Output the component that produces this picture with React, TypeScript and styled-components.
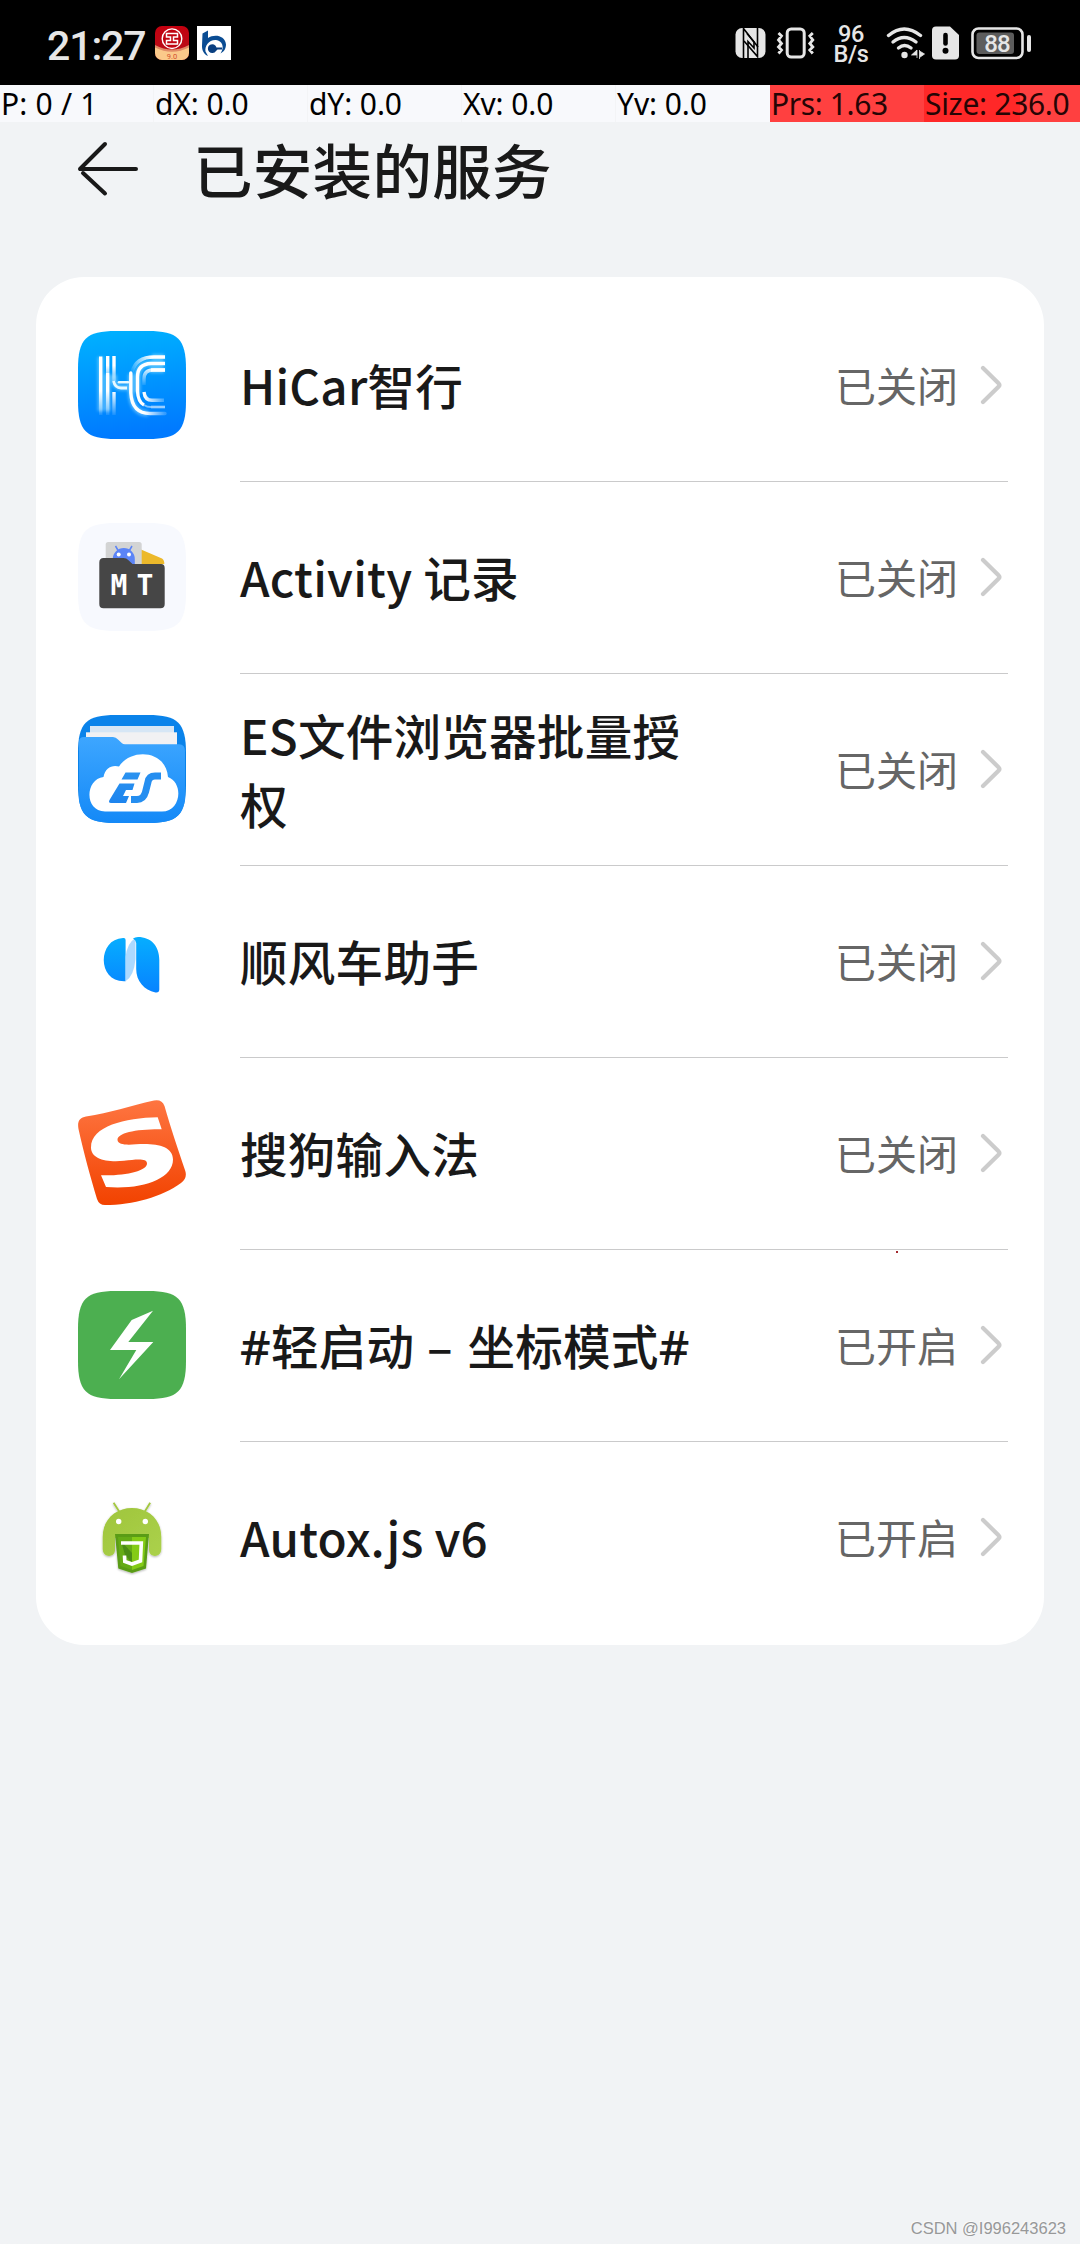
import React from 'react';
import styled, { createGlobalStyle } from 'styled-components';

const Global = createGlobalStyle`
  * { box-sizing: border-box; }
  body { margin: 0; background: #f1f3f5; }
`;

const Screen = styled.div`
  position: relative;
  display: flex;
  flex-direction: column;
  width: 1080px;
  height: 2244px;
  overflow: hidden;
  background: #f1f3f5;
  color: #191919;
  font-family: "Noto Sans CJK SC", "Noto Sans", sans-serif;
`;

const StatusBar = styled.header`
  display: flex;
  align-items: center;
  height: 85px;
  padding: 1px 48px 0 47px;
  background: #000;
  color: #e6e6e6;
`;

const Clock = styled.span`
  width: 108px;
  font-family: Roboto, sans-serif;
  font-size: 41px;
  font-weight: 500;
  line-height: 48px;
  letter-spacing: -1.1px;
  padding-top: 5px;
  white-space: nowrap;
`;

const Notifications = styled.div`
  display: flex;
  gap: 8px;
`;

const Indicators = styled.div`
  display: flex;
  align-items: center;
  margin-left: auto;
`;

const Indicator = styled.svg<{ $gap: number }>`
  display: block;
  margin-left: ${(p) => p.$gap}px;
`;

const Speed = styled.div`
  display: flex;
  flex-direction: column;
  align-items: center;
  width: 38px;
  margin: 0 16px 0 16px;
  padding-top: 2px;
  font-family: Roboto, sans-serif;
  font-size: 23.5px;
  font-weight: 500;
  line-height: 20.5px;
  letter-spacing: -0.3px;
`;

const DebugStrip = styled.div`
  display: grid;
  grid-template-columns: 153px 154px 154px 154px 155px 154px 156px;
  height: 37px;
`;

const DebugCell = styled.div<{ $bg?: string; $first?: boolean; $track?: number }>`
  padding-left: 1px;
  border-left: ${(p) => (p.$bg || p.$first ? 'none' : '1px solid #f3f4f6')};
  background: ${(p) => p.$bg || '#f8f9fc'};
  color: ${(p) => (p.$bg ? '#260505' : '#000')};
  font-family: "Noto Sans", sans-serif;
  font-size: 30px;
  line-height: 37px;
  letter-spacing: ${(p) => p.$track ?? -0.1}px;
  white-space: nowrap;
`;

const TitleBar = styled.div`
  display: flex;
  align-items: center;
  height: 155px;
  padding: 0 0 61px 76px;
`;

const Title = styled.h1`
  margin: -3px 0 0 53px;
  font-size: 59.5px;
  line-height: 80px;
  letter-spacing: 0.3px;
  font-weight: 500;
`;

const Card = styled.main`
  margin: 0 36px;
  padding: 12px 36px 12px 42px;
  border-radius: 48px;
  background: #fff;
`;

const Row = styled.div`
  display: grid;
  grid-template: 192px / 108px 1fr;
  column-gap: 54px;
  align-items: center;
  height: 192px;
`;

const RowBody = styled.div<{ $divided: boolean }>`
  display: flex;
  align-items: center;
  align-self: start;
  height: 193px;
  padding: 0 6px 1px 0;
  border-bottom: 1px solid ${(p) => (p.$divided ? '#cacacb' : 'transparent')};
`;

const Name = styled.span`
  width: 480px;
  font-size: 47.6px;
  line-height: 69px;
  letter-spacing: 0.2px;
  font-weight: 500;
  white-space: pre-wrap;
`;

const Dash = styled.span`
  letter-spacing: 2px;
`;

const Hash = styled.span`
  font-family: "Noto Sans", sans-serif;
  line-height: 1;
`;

const State = styled.span`
  margin: -2px 22px 0 auto;
  color: #666;
  font-size: 41px;
  line-height: 60px;
`;

const Chevron = styled.svg`
  display: block;
`;

const AppIcon = styled.svg`
  display: block;
  width: 108px;
  height: 108px;
`;

const TouchDot = styled.i`
  position: absolute;
  left: 896px;
  top: 1251px;
  width: 2px;
  height: 2px;
  background: #a32a2e;
`;

const Watermark = styled.footer`
  margin: auto 14px 6px auto;
  font-family: "Liberation Sans", Arial, sans-serif;
  font-size: 16.5px;
  line-height: 20px;
  color: #979899;
  text-shadow: -1px -1px 0 #fafafa;
`;

const squircle = 'M0 38C0 8 8 0 38 0H70C100 0 108 8 108 38V70C108 100 100 108 70 108H38C8 108 0 100 0 70Z';

const HiCarIcon = () => (
  <AppIcon viewBox="0 0 108 108">
    <defs>
      <linearGradient id="hcBg" x1="0" y1="0" x2="0.12" y2="1">
        <stop offset="0" stopColor="#00b2ff" />
        <stop offset="1" stopColor="#007aff" />
      </linearGradient>
      <linearGradient id="hcDown" gradientUnits="userSpaceOnUse" x1="0" y1="60" x2="0" y2="84">
        <stop offset="0" stopColor="#fff" />
        <stop offset="1" stopColor="#fff" stopOpacity="0.1" />
      </linearGradient>
      <linearGradient id="hcTop" gradientUnits="userSpaceOnUse" x1="0" y1="24" x2="0" y2="54">
        <stop offset="0" stopColor="#fff" />
        <stop offset="0.35" stopColor="#fff" />
        <stop offset="1" stopColor="#fff" stopOpacity="0.1" />
      </linearGradient>
      <linearGradient id="hcRight" gradientUnits="userSpaceOnUse" x1="66" y1="0" x2="87" y2="0">
        <stop offset="0" stopColor="#fff" />
        <stop offset="1" stopColor="#fff" stopOpacity="0.2" />
      </linearGradient>
      <linearGradient id="hcLeft" gradientUnits="userSpaceOnUse" x1="54" y1="40" x2="74" y2="26">
        <stop offset="0" stopColor="#fff" stopOpacity="0.1" />
        <stop offset="1" stopColor="#fff" />
      </linearGradient>
      <filter id="hcGlow" x="-20%" y="-20%" width="140%" height="140%">
        <feGaussianBlur stdDeviation="1.6" />
      </filter>
    </defs>
    <path d={squircle} fill="url(#hcBg)" />
    <path d="M22.7 26V80M29.6 43V80M36 44V50Q38 57 44 56.5H50M53 43V62Q54 82 70 82.5M59.5 62V46Q60 33 72 32.5H86M72 39H86M74 26H86" fill="none" stroke="#a8e8ff" strokeOpacity="0.5" strokeWidth="6" filter="url(#hcGlow)" />
    <g fill="none" strokeWidth="3.4">
      <path d="M21 25.500h3.400V84H21Z" fill="url(#hcDown)" />
      <path d="M28 42h3.400V84H28Z" fill="url(#hcDown)" />
      <path d="M34.300 61h3.400V84h-3.400Z" fill="url(#hcDown)" />
      <path d="M28 25h3.400V42H28ZM34.300 25h3.400V50h-3.400Z" fill="url(#hcTop)" />
      <path d="M35.500 50Q37 57 43 57H49" stroke="#e8f9ff" strokeWidth="2.800" />
      <path d="M41 51.300H50" stroke="#e8f9ff" strokeWidth="2.600" strokeLinecap="round" />
      <path d="M54 41Q58 26 76 26H87" stroke="url(#hcLeft)" />
      <path d="M52.800 42V62Q54 82.500 72 82.500H87" stroke="url(#hcRight)" strokeLinecap="round" />
      <path d="M87 32.500H73Q59.500 33 59.500 46V60Q60 71 66 74" stroke="#fff" />
      <path d="M66 74Q69 76 73 76" stroke="#fff" strokeOpacity="0.5" strokeWidth="2" />
      <path d="M73 76H87" stroke="#fff" strokeOpacity="0.6" strokeWidth="2.600" />
      <path d="M87 39H75Q66 39 66 48V54" stroke="url(#hcTop)" />
      <path d="M73 39H87" stroke="#fff" />
      <path d="M66 61Q67 69.300 74 69.300H86" stroke="url(#hcRight)" />
    </g>
  </AppIcon>
);

const MtIcon = () => (
  <AppIcon viewBox="0 0 108 108">
    <path d={squircle} fill="#f7f9fe" />
    <path d="M63 26.500L84 35.500Q86.500 37 86.300 41H63Z" fill="#ecb92b" />
    <rect x="27.700" y="19" width="36" height="30" rx="2.500" fill="#d3d4d4" />
    <path d="M34.800 41V36a11 11 0 0 1 22 0V41Z" fill="#5b84f7" />
    <path d="M37.500 23l3.500 6M54 23l-3.500 6" stroke="#5b84f7" strokeWidth="1.500" fill="none" />
    <circle cx="40.700" cy="31.500" r="2" fill="#fff" />
    <circle cx="51" cy="31.500" r="2" fill="#fff" />
    <path d="M21.300 39.500Q21.300 35 25.500 35H45.500Q48.500 35 50.500 37.200L54.500 41H83Q86.700 41 86.700 45V81Q86.700 85.300 82.500 85.300H25.500Q21.300 85.300 21.300 81Z" fill="#464646" />
    <text x="32.500 58.500" y="72.300" fontFamily="DejaVu Sans Mono, monospace" fontWeight="700" fontSize="28" fill="#fff">MT</text>
  </AppIcon>
);

const EsIcon = () => (
  <AppIcon viewBox="0 0 108 108">
    <defs>
      <linearGradient id="esFront" x1="0" y1="0" x2="0" y2="1">
        <stop offset="0" stopColor="#3da6ff" />
        <stop offset="1" stopColor="#1489f7" />
      </linearGradient>
      <linearGradient id="esInk" x1="0" y1="0" x2="0" y2="1">
        <stop offset="0" stopColor="#2b93f0" />
        <stop offset="1" stopColor="#1d84ee" />
      </linearGradient>
      <clipPath id="esClip"><path d={squircle} /></clipPath>
    </defs>
    <g clipPath="url(#esClip)">
      <rect width="108" height="108" fill="#0a83ea" />
      <rect x="12" y="11" width="84" height="10" fill="#d6e6f5" />
      <rect x="8" y="17.300" width="91" height="20" fill="#f1f1f3" />
      <path d="M1 27Q1 22 6 22H35Q38 22 40 24.500L44 28.300Q45 29.300 47 29.300H101Q107 29.300 107 36V108H1Z" fill="url(#esFront)" />
    </g>
    <path d="M27 96.500C6 96.500 7 64 25.500 62C27 53 34 49.500 41 51.500C53 33 88 35 90 62C106 68 103 96.500 84 96.500Z" fill="#fff" />
    <path d="M47.500 57.500H62.500L59.500 64.500H43.500ZM41.500 68.500H56.500L54.500 75H48L45 81H51L48 88H33Q30 88 31.500 85Z" fill="url(#esInk)" />
    <path d="M83 61H77Q71 61 70 67L67.500 77Q65.500 84.500 59 84.500H53" fill="none" stroke="#258ef0" strokeWidth="7" />
  </AppIcon>
);

const RideIcon = () => (
  <AppIcon viewBox="0 0 108 108">
    <defs>
      <linearGradient id="ride" gradientUnits="userSpaceOnUse" x1="0" y1="30" x2="0" y2="86">
        <stop offset="0" stopColor="#06aeff" />
        <stop offset="1" stopColor="#0782ff" />
      </linearGradient>
    </defs>
    <path d="M45 31Q47.600 30.500 47.600 33V74.300C19 76 19 32 45 31Z" fill="url(#ride)" />
    <path d="M47.600 50Q49 36 57.500 31V52Q56 69 47.600 74.300Z" fill="#acd9ff" />
    <path d="M55 31.500Q57 30 60 30C73 30 81.300 39 81.300 53V82.500Q81.300 86 77.500 85.500C66 83 58.200 74 58.200 62V36Q58 33 55 31.500Z" fill="url(#ride)" />
  </AppIcon>
);

const SogouIcon = () => (
  <AppIcon viewBox="0 0 108 108">
    <defs>
      <linearGradient id="sogou" x1="0" y1="0" x2="0" y2="1">
        <stop offset="0" stopColor="#fe7541" />
        <stop offset="1" stopColor="#f24200" />
      </linearGradient>
    </defs>
    <path d="M.500 30C-1 22 2 18.500 8 17.500C32 14 52 7 76 1.500Q84 0 86.500 7C93 30 99 47 107.300 72Q109.500 79 103 84C84 98 55 106 27 106Q21 106 19 100C12 76 6 55 .500 30Z" fill="url(#sogou)" />
    <path d="M79.700 18.300L83.700 30.300C58 30 39.300 34 39.500 41C40 46 49 46 58 45.300C78 44 95 47 95 60.500C95 80 64 91 28 88L23 76.300C48 77 69 72 69 64.500C69 59 58 60.500 46 61.800C28 63.500 13 60 13 48.500C13 27 47 19 79.700 18.300Z" fill="#fff" />
  </AppIcon>
);

const BoltIcon = () => (
  <AppIcon viewBox="0 0 108 108">
    <path d={squircle} fill="#4caf50" />
    <path d="M75 19.700L53.700 29L32 59H58.300L41 88.300L75.300 51H50.300Z" fill="#fff" />
  </AppIcon>
);

const AutoxIcon = () => (
  <AppIcon viewBox="0 0 108 108">
    <defs>
      <linearGradient id="droid" x1="0" y1="0" x2="1" y2="1">
        <stop offset="0" stopColor="#9fc53c" />
        <stop offset="1" stopColor="#abd14b" />
      </linearGradient>
      <filter id="droidShadow" x="-20%" y="-20%" width="140%" height="140%">
        <feDropShadow dx="0" dy="1" stdDeviation="0.8" floodOpacity="0.3" />
      </filter>
    </defs>
    <g filter="url(#droidShadow)">
      <path d="M35.600 19.700L41.500 29M72.200 19.700L66.500 29" stroke="#a3c83f" strokeWidth="1.800" fill="none" />
      <path d="M24.700 54C24.700 36 38 25 54 25S83.300 36 83.300 54V66C83.300 75 71 75 71 67V55H37V67C37 75 24.700 75 24.700 66Z" fill="url(#droid)" />
      <circle cx="40.700" cy="38.500" r="2.700" fill="#fff" />
      <circle cx="67.300" cy="38.500" r="2.700" fill="#fff" />
      <path d="M37 51H71L68 85.500L54 90L40.300 85.500Z" fill="#5a9c17" />
      <path d="M54 54H68L65.500 83L54 87Z" fill="#84cb15" />
      <path d="M40 54H54V87L42.500 83Z" fill="#65ab16" />
      <path d="M43 58L54 70V80L47 72Z" fill="#4c8c12" />
    </g>
    <path d="M43 60H63.300L62.500 78L54 81L46.800 78.500L46.500 72.500" stroke="#fff" strokeWidth="3.600" fill="none" />
  </AppIcon>
);

const BankRedIcon = () => (
  <svg width="34" height="34" viewBox="0 0 34 34">
    <defs>
      <clipPath id="brClip"><rect width="34" height="34" rx="7" /></clipPath>
      <linearGradient id="brBg" x1="0" y1="0" x2="0" y2="1">
        <stop offset="0" stopColor="#c4000f" />
        <stop offset="1" stopColor="#b5121c" />
      </linearGradient>
    </defs>
    <g clipPath="url(#brClip)">
      <rect width="34" height="34" fill="url(#brBg)" />
      <path d="M0 20Q17 30 34 20V34H0Z" fill="#fbc98a" />
      <path d="M0 19Q17 28 34 19V21.500Q17 30 0 21.500Z" fill="#e08a66" />
    </g>
    <circle cx="17" cy="12.700" r="9.800" fill="#c00411" stroke="#fff" strokeWidth="1.400" />
    <path d="M11.500 7.500H22.500V11H18.500V14.500H22.500V18H11.500V14.500H15.500V11H11.500Z" fill="none" stroke="#fff" strokeWidth="1.500" />
    <text x="17" y="32.700" textAnchor="middle" fontFamily="Roboto, sans-serif" fontSize="7.500" fill="#d4502f">9.0</text>
  </svg>
);

const BankBlueIcon = () => (
  <svg width="34" height="34" viewBox="0 0 34 34">
    <rect width="34" height="34" fill="#fff" />
    <path d="M5.500 7.500L11 4.500V12C17 8 28 9 29 18.500C29 23 26.500 26 23.500 27.500C28 21 25 14.500 19 14C12 13.500 7.500 20 8.500 25.500L11 30C6.500 28 5 24 5 20Z" fill="#0a4c93" />
    <path d="M25 21.500H19.500A4.400 4.400 0 1 0 19 25L20.500 23.500H25Z" fill="#0a3f80" />
  </svg>
);

const Nfc = () => (
  <Indicator $gap={0} width="32" height="32" viewBox="0 0 32 32">
    <rect x="0.500" y="1" width="30" height="30" rx="6.500" fill="#e6e6e6" />
    <path d="M8.500 31V1.500L23 20" stroke="#000" strokeWidth="1.600" fill="none" />
    <path d="M22.500 1V29.500L9 14" stroke="#000" strokeWidth="1.600" fill="none" />
    <path d="M13 31V14.500L19 21V15L12 6.500" stroke="#000" strokeWidth="1.600" fill="none" />
  </Indicator>
);

const Vibrate = () => (
  <Indicator $gap={9} width="40" height="34" viewBox="0 0 40 34">
    <rect x="11.200" y="3" width="17" height="28" rx="4" fill="none" stroke="#e6e6e6" strokeWidth="3" />
    <path d="M2.500 7l3 3-3 4 3 3.500-3 3.500 3 3-3 3.500M36.800 7l-3 3 3 4-3 3.500 3 3.500-3 3 3 3.500" fill="none" stroke="#e6e6e6" strokeWidth="2.800" />
  </Indicator>
);

const Wifi = () => (
  <Indicator $gap={0} width="40" height="34" viewBox="0 0 40 34">
    <g fill="none" stroke="#e6e6e6" strokeWidth="3.400" strokeLinecap="round">
      <path d="M2.500 9.500Q18 -3.500 34.500 9.500" />
      <path d="M7 16Q18 7 30 16" />
      <path d="M12.500 22Q18.500 17 25 22" />
    </g>
    <circle cx="18.500" cy="29" r="3.200" fill="#e6e6e6" />
    <path d="M31 24V32M31 29H25.500L31 24M33.500 33V24M33.500 25L38.500 28L33.500 31.500" fill="#e6e6e6" stroke="#e6e6e6" strokeWidth="0.800" />
  </Indicator>
);

const Sim = () => (
  <Indicator $gap={6} width="27" height="34" viewBox="0 0 27 34">
    <path d="M4 0.500H18L27 9V29.500Q27 33.500 23 33.500H4Q0 33.500 0 29.500V4.500Q0 .500 4 .500Z" fill="#e6e6e6" />
    <path d="M13.500 9V17.500" stroke="#000" strokeWidth="4.600" strokeLinecap="round" />
    <circle cx="13.500" cy="24.800" r="3" fill="#000" />
  </Indicator>
);

const Battery = () => (
  <Indicator $gap={12} width="61" height="34" viewBox="0 0 61 34">
    <rect x="1.500" y="2.500" width="50" height="29.500" rx="6" fill="none" stroke="#e6e6e6" strokeWidth="2.600" />
    <rect x="5.500" y="6.500" width="37.500" height="21.500" rx="3" fill="#5c5c5c" />
    <rect x="56" y="9" width="4" height="17" rx="2" fill="#e6e6e6" />
    <text x="26" y="25.700" textAnchor="middle" fontFamily="Roboto, sans-serif" fontWeight="500" fontSize="24" letterSpacing="-0.800" fill="#e6e6e6">88</text>
  </Indicator>
);

const services: { id: string; icon: React.ReactNode; name: React.ReactNode; state: string }[] = [
  { id: 'hicar', icon: <HiCarIcon />, name: 'HiCar智行', state: '已关闭' },
  { id: 'mt', icon: <MtIcon />, name: 'Activity 记录', state: '已关闭' },
  { id: 'es', icon: <EsIcon />, name: 'ES文件浏览器批量授权', state: '已关闭' },
  { id: 'ride', icon: <RideIcon />, name: '顺风车助手', state: '已关闭' },
  { id: 'sogou', icon: <SogouIcon />, name: '搜狗输入法', state: '已关闭' },
  {
    id: 'bolt',
    icon: <BoltIcon />,
    name: (
      <>
        <Hash>#</Hash>轻启动<Dash> – </Dash>坐标模式<Hash>#</Hash>
      </>
    ),
    state: '已开启',
  },
  { id: 'autox', icon: <AutoxIcon />, name: 'Autox.js v6', state: '已开启' },
];

const readings: { text: string; bg?: string; track?: number }[] = [
  { text: 'P: 0 / 1', track: 0.2 },
  { text: 'dX: 0.0' },
  { text: 'dY: 0.0' },
  { text: 'Xv: 0.0' },
  { text: 'Yv: 0.0' },
  { text: 'Prs: 1.63', bg: '#ff4040', track: -0.4 },
  { text: 'Size: 236.0', bg: 'linear-gradient(90deg, #ff2828 96px, #ff4040 96px)', track: -0.3 },
];

export default function App() {
  return (
    <Screen>
      <Global />
      <StatusBar>
        <Clock>21:27</Clock>
        <Notifications>
          <BankRedIcon />
          <BankBlueIcon />
        </Notifications>
        <Indicators>
          <Nfc />
          <Vibrate />
          <Speed>
            <span>96</span>
            <span>B/s</span>
          </Speed>
          <Wifi />
          <Sim />
          <Battery />
        </Indicators>
      </StatusBar>
      <DebugStrip>
        {readings.map((r, i) => (
          <DebugCell key={r.text} $first={i === 0} $bg={r.bg} $track={r.track}>{r.text}</DebugCell>
        ))}
      </DebugStrip>
      <TitleBar>
        <svg width="64" height="60" viewBox="0 0 64 60">
          <path d="M60 30H4M29 5L4 30M7 34L29 54.500" fill="none" stroke="#191919" strokeWidth="4" strokeLinecap="round" />
        </svg>
        <Title>已安装的服务</Title>
      </TitleBar>
      <Card>
        {services.map((s, i) => (
          <Row key={s.id}>
            {s.icon}
            <RowBody $divided={i < services.length - 1}>
              <Name>{s.name}</Name>
              <State>{s.state}</State>
              <Chevron width="22" height="42" viewBox="0 0 22 42">
                <path d="M3 4L18.500 19.200Q20.300 21 18.500 22.800L3 38" fill="none" stroke="#ccc" strokeWidth="4.200" strokeLinecap="round" />
              </Chevron>
            </RowBody>
          </Row>
        ))}
      </Card>
      <Watermark>CSDN @I996243623</Watermark>
      <TouchDot />
    </Screen>
  );
}
